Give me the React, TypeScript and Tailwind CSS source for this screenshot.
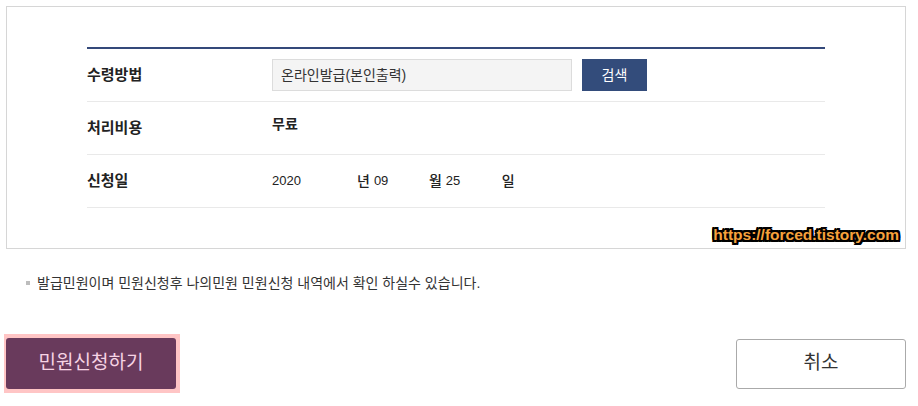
import React from 'react';

const FONT = "font-['Liberation_Sans','Noto_Sans_CJK_KR',sans-serif]";

function Row({ label, children }: { label: string; children: React.ReactNode }) {
  return (
    <div className="flex h-[53px] items-center border-b border-[#e9e9e9]">
      <div className="w-[185px] shrink-0 text-[15px] font-semibold text-[#222]">{label}</div>
      <div className="flex flex-1 items-center">{children}</div>
    </div>
  );
}

export default function App() {
  return (
    <div className={`${FONT} w-[912px] bg-white pl-[6px] pt-[6px] text-[#333]`}>
      {/* ── Form box ── */}
      <div className="relative w-[900px] border border-[#d6d6d6] px-[80px] py-[40px]">
        <div className="border-t-2 border-[#34497a]">
          <Row label="수령방법">
            <div className="flex h-[32px] w-[300px] items-center border border-[#dcdcdc] bg-[#f4f4f4] pl-[8px] text-[14px] text-[#333]">
              온라인발급(본인출력)
            </div>
            <button className="ml-[10px] h-[32px] w-[65px] bg-[#334c7b] text-[14px] text-white">검색</button>
          </Row>
          <Row label="처리비용">
            <span className="mb-[8px] text-[14px] font-semibold text-[#222]">무료</span>
          </Row>
          <Row label="신청일">
            <div className="flex items-center text-[13px] text-[#222]">
              <span className="w-[85px]">2020</span>
              <span className="text-[14px] font-medium">년</span>
              <span className="ml-[4px] w-[55px]">09</span>
              <span className="text-[14px] font-medium">월</span>
              <span className="ml-[4px] w-[56px]">25</span>
              <span className="text-[14px] font-medium">일</span>
            </div>
          </Row>
        </div>

        {/* watermark */}
        <div className="absolute bottom-[6px] right-[6px] font-['Liberation_Sans',sans-serif] text-[15.5px] font-bold leading-none text-[#f7a23c] [text-shadow:-2px_0_0_#000,2px_0_0_#000,0_-2px_0_#000,0_2px_0_#000,-1px_-1px_0_#000,1px_-1px_0_#000,-1px_1px_0_#000,1px_1px_0_#000,-2px_-2px_0_#000,2px_2px_0_#000,2px_-2px_0_#000,-2px_2px_0_#000,-2px_-1px_0_#000,2px_1px_0_#000,-1px_2px_0_#000,1px_-2px_0_#000]">
          https://forced.tistory.com
        </div>
      </div>

      {/* ── Notice ── */}
      <div className="mt-[24px] flex items-center pl-[20px] text-[14px] leading-[20px] text-[#333]">
        <span className="h-[4px] w-[4px] shrink-0 bg-[#bdbdbd]" />
        <span className="ml-[7px]">발급민원이며 민원신청후 나의민원 민원신청 내역에서 확인 하실수 있습니다.</span>
      </div>

      {/* ── Actions ── */}
      <div className="mt-[41px] flex w-[900px] items-center justify-between pb-[13px]">
        <div className="-ml-[2px] bg-[#ffc5c5] pb-[4px] pl-[2px] pr-[4px] pt-[4px]">
          <button className="h-[51px] w-[170px] rounded-[3px] bg-[#693a5c] text-[19px] text-[#f6d3e4]">
            민원신청하기
          </button>
        </div>
        <button className="h-[50px] w-[170px] rounded-[3px] border border-[#aaaaaa] bg-white text-[19px] text-[#333]">
          취소
        </button>
      </div>
    </div>
  );
}
